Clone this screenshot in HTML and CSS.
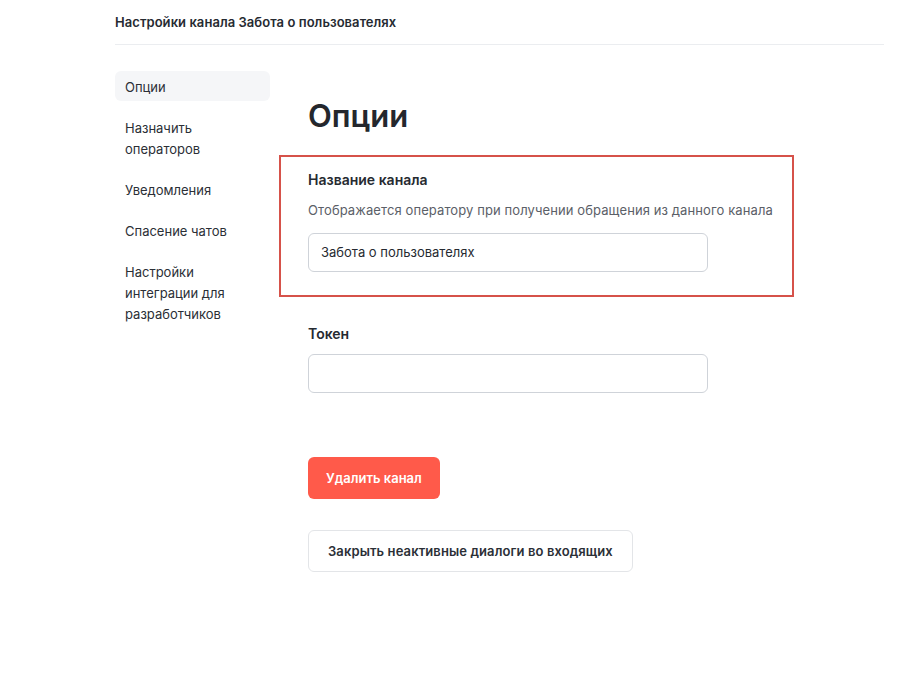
FILE: index.html
```html
<!DOCTYPE html>
<html lang="ru">
<head>
<meta charset="utf-8">
<link rel="stylesheet" href="styles.css">
</head>
<body>
<div class="page">
  <header class="topbar">Настройки канала Забота о пользователях</header>
  <div class="layout">
    <nav class="sidebar">
      <a class="nav-item active">Опции</a>
      <a class="nav-item">Назначить операторов</a>
      <a class="nav-item">Уведомления</a>
      <a class="nav-item">Спасение чатов</a>
      <a class="nav-item">Настройки интеграции для разработчиков</a>
    </nav>
    <main class="content">
      <h1 class="title">Опции</h1>
      <section class="field highlighted">
        <div class="label">Название канала</div>
        <div class="hint">Отображается оператору при получении обращения из данного канала</div>
        <div class="input">Забота о пользователях</div>
      </section>
      <section class="field token">
        <div class="label">Токен</div>
        <div class="input"></div>
      </section>
      <div class="actions">
        <button class="btn btn-danger">Удалить канал</button>
        <button class="btn btn-outline">Закрыть неактивные диалоги во входящих</button>
      </div>
    </main>
  </div>
</div>
</body>
</html>
```
FILE: styles.css
```css
* { box-sizing: border-box; }
html, body { margin: 0; padding: 0; background: #fff; }
body {
  font-family: Inter, "Noto Sans", "Liberation Sans", sans-serif;
  color: #262a31;
}
.page {
  width: 769px;
  margin-left: 115px;
}
.topbar {
  height: 45px;
  padding-top: 14px;
  font-size: 13px;
  font-weight: 600;
  line-height: 16px;
  border-bottom: 1px solid #ebedf0;
  color: #262a31;
  letter-spacing: 0.05px;
}
.layout {
  display: flex;
  padding-top: 26px;
}
.sidebar {
  width: 155px;
  flex: none;
  display: flex;
  flex-direction: column;
  gap: 11px;
}
.nav-item {
  display: block;
  padding: 6px 10px 3px;
  font-size: 13px;
  line-height: 21px;
  color: #2b2f36;
  border-radius: 6px;
}
.nav-item.active {
  background: #f5f6f8;
}
.content {
  flex: 1;
  padding-left: 9px;
}
.title {
  margin: 27px 0 0 29px;
  font-size: 31px;
  line-height: 36px;
  font-weight: 600;
  color: #24272d;
}
.field {
  padding: 12px 29px 0;
}
.highlighted {
  margin-top: 21px;
  width: 515px;
  height: 142px;
  border: 2px solid #d6524a;
  padding-top: 13px;
  padding-left: 27px;
  padding-right: 0;
}
.label {
  font-size: 14px;
  font-weight: 600;
  line-height: 20px;
  color: #262a31;
}
.hint {
  margin-top: 10px;
  font-size: 13px;
  line-height: 20px;
  color: #5b6068;
  white-space: nowrap;
  letter-spacing: 0.1px;
}
.input {
  margin-top: 13px;
  width: 400px;
  height: 39px;
  border: 1px solid #cfd3d9;
  border-radius: 6px;
  padding: 0 12px;
  font-size: 13px;
  line-height: 37px;
  color: #262a31;
}
.token {
  margin-top: 27px;
  padding-top: 0;
}
.token .input { margin-top: 10px; }
.actions {
  padding-left: 29px;
  margin-top: 64px;
  display: flex;
  flex-direction: column;
  align-items: flex-start;
  gap: 31px;
}
.btn {
  font-family: inherit;
  font-size: 13px;
  font-weight: 600;
  height: 42px;
  border-radius: 6px;
  padding: 0 18px;
  cursor: pointer;
}
.btn-danger {
  background: #ff5a4a;
  color: #fff;
  border: none;
}
.btn-outline {
  background: #fff;
  color: #2b2f36;
  border: 1px solid #e3e5e8;
  padding: 0 19px;
  letter-spacing: 0.1px;
}
```
